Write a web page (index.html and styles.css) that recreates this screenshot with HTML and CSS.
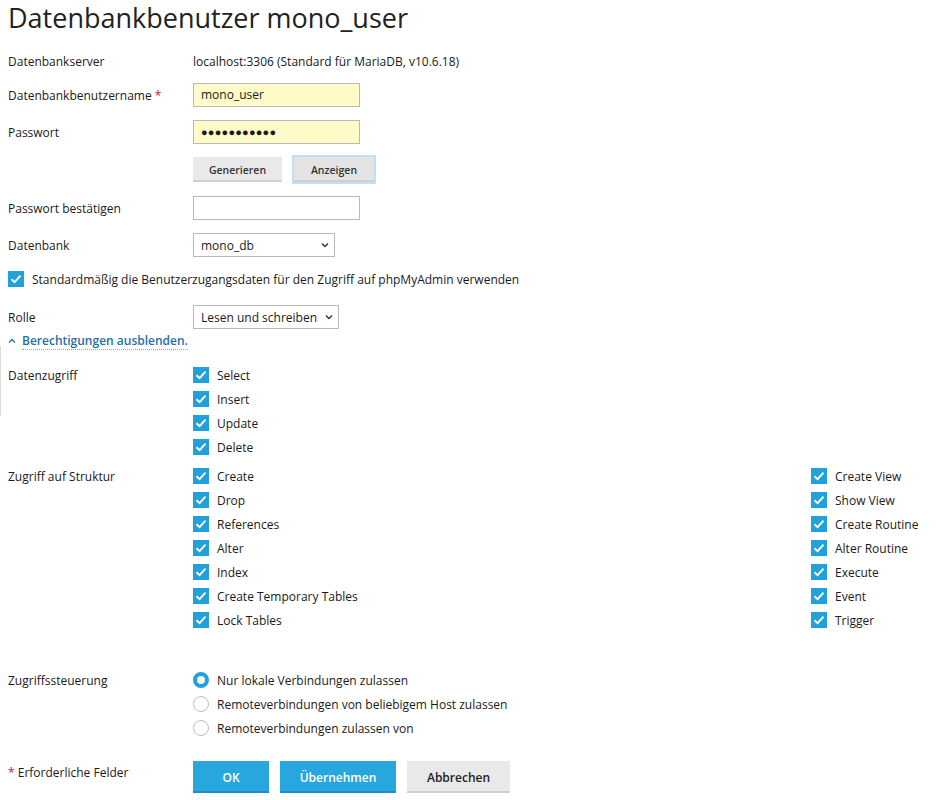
FILE: index.html
```html
<!DOCTYPE html>
<html lang="de">
<head>
<meta charset="utf-8">
<title>Datenbankbenutzer mono_user</title>
<link rel="stylesheet" href="styles.css">
</head>
<body>
<div class="edge-line"></div>
<main class="page">
  <h1 class="title">Datenbankbenutzer mono_user</h1>

  <div class="row r-server">
    <div class="label">Datenbankserver</div>
    <div class="field">localhost:3306 (Standard für MariaDB, v10.6.18)</div>
  </div>

  <div class="row r-user">
    <div class="label">Datenbankbenutzername <span class="req">*</span></div>
    <div class="field"><div class="input filled">mono_user</div></div>
  </div>

  <div class="row r-pass">
    <div class="label">Passwort</div>
    <div class="field"><div class="input filled dots">●●●●●●●●●●●</div></div>
  </div>

  <div class="row r-btns">
    <div class="label"></div>
    <div class="field btns">
      <button class="btn grey">Generieren</button>
      <button class="btn grey focus">Anzeigen</button>
    </div>
  </div>

  <div class="row r-confirm">
    <div class="label">Passwort bestätigen</div>
    <div class="field"><div class="input"></div></div>
  </div>

  <div class="row r-db">
    <div class="label">Datenbank</div>
    <div class="field">
      <div class="select w-db"><span>mono_db</span>
        <svg class="chev" width="8" height="6" viewBox="0 0 8 6"><path d="M1 1.5 L4 4.5 L7 1.5" fill="none" stroke="#333" stroke-width="1.4"/></svg>
      </div>
    </div>
  </div>

  <div class="row r-pma">
    <label class="check wide"><span class="box"><svg width="16" height="16" viewBox="0 0 16 16"><path d="M3.5 8.2 L6.6 11.2 L12.5 4.6" fill="none" stroke="#fff" stroke-width="1.9"/></svg></span>Standardmäßig die Benutzerzugangsdaten für den Zugriff auf phpMyAdmin verwenden</label>
  </div>

  <div class="row r-role">
    <div class="label">Rolle</div>
    <div class="field">
      <div class="select w-role"><span>Lesen und schreiben</span>
        <svg class="chev" width="8" height="6" viewBox="0 0 8 6"><path d="M1 1.5 L4 4.5 L7 1.5" fill="none" stroke="#333" stroke-width="1.4"/></svg>
      </div>
    </div>
  </div>

  <div class="row r-link">
    <a class="toggle" href="#"><svg class="up" width="8" height="6" viewBox="0 0 8 6"><path d="M1 4.5 L4 1.5 L7 4.5" fill="none" stroke="#1f6fa8" stroke-width="1.3"/></svg><span class="link-text">Berechtigungen ausblenden.</span></a>
  </div>

  <div class="group r-data">
    <div class="label">Datenzugriff</div>
    <div class="list">
      <label class="check"><span class="box"><svg width="16" height="16" viewBox="0 0 16 16"><path d="M3.5 8.2 L6.6 11.2 L12.5 4.6" fill="none" stroke="#fff" stroke-width="1.9"/></svg></span>Select</label>
      <label class="check"><span class="box"><svg width="16" height="16" viewBox="0 0 16 16"><path d="M3.5 8.2 L6.6 11.2 L12.5 4.6" fill="none" stroke="#fff" stroke-width="1.9"/></svg></span>Insert</label>
      <label class="check"><span class="box"><svg width="16" height="16" viewBox="0 0 16 16"><path d="M3.5 8.2 L6.6 11.2 L12.5 4.6" fill="none" stroke="#fff" stroke-width="1.9"/></svg></span>Update</label>
      <label class="check"><span class="box"><svg width="16" height="16" viewBox="0 0 16 16"><path d="M3.5 8.2 L6.6 11.2 L12.5 4.6" fill="none" stroke="#fff" stroke-width="1.9"/></svg></span>Delete</label>
    </div>
  </div>

  <div class="group struct r-struct">
    <div class="label">Zugriff auf Struktur</div>
    <div class="list">
      <label class="check"><span class="box"><svg width="16" height="16" viewBox="0 0 16 16"><path d="M3.5 8.2 L6.6 11.2 L12.5 4.6" fill="none" stroke="#fff" stroke-width="1.9"/></svg></span>Create</label>
      <label class="check"><span class="box"><svg width="16" height="16" viewBox="0 0 16 16"><path d="M3.5 8.2 L6.6 11.2 L12.5 4.6" fill="none" stroke="#fff" stroke-width="1.9"/></svg></span>Drop</label>
      <label class="check"><span class="box"><svg width="16" height="16" viewBox="0 0 16 16"><path d="M3.5 8.2 L6.6 11.2 L12.5 4.6" fill="none" stroke="#fff" stroke-width="1.9"/></svg></span>References</label>
      <label class="check"><span class="box"><svg width="16" height="16" viewBox="0 0 16 16"><path d="M3.5 8.2 L6.6 11.2 L12.5 4.6" fill="none" stroke="#fff" stroke-width="1.9"/></svg></span>Alter</label>
      <label class="check"><span class="box"><svg width="16" height="16" viewBox="0 0 16 16"><path d="M3.5 8.2 L6.6 11.2 L12.5 4.6" fill="none" stroke="#fff" stroke-width="1.9"/></svg></span>Index</label>
      <label class="check"><span class="box"><svg width="16" height="16" viewBox="0 0 16 16"><path d="M3.5 8.2 L6.6 11.2 L12.5 4.6" fill="none" stroke="#fff" stroke-width="1.9"/></svg></span>Create Temporary Tables</label>
      <label class="check"><span class="box"><svg width="16" height="16" viewBox="0 0 16 16"><path d="M3.5 8.2 L6.6 11.2 L12.5 4.6" fill="none" stroke="#fff" stroke-width="1.9"/></svg></span>Lock Tables</label>
    </div>
    <div class="list">
      <label class="check"><span class="box"><svg width="16" height="16" viewBox="0 0 16 16"><path d="M3.5 8.2 L6.6 11.2 L12.5 4.6" fill="none" stroke="#fff" stroke-width="1.9"/></svg></span>Create View</label>
      <label class="check"><span class="box"><svg width="16" height="16" viewBox="0 0 16 16"><path d="M3.5 8.2 L6.6 11.2 L12.5 4.6" fill="none" stroke="#fff" stroke-width="1.9"/></svg></span>Show View</label>
      <label class="check"><span class="box"><svg width="16" height="16" viewBox="0 0 16 16"><path d="M3.5 8.2 L6.6 11.2 L12.5 4.6" fill="none" stroke="#fff" stroke-width="1.9"/></svg></span>Create Routine</label>
      <label class="check"><span class="box"><svg width="16" height="16" viewBox="0 0 16 16"><path d="M3.5 8.2 L6.6 11.2 L12.5 4.6" fill="none" stroke="#fff" stroke-width="1.9"/></svg></span>Alter Routine</label>
      <label class="check"><span class="box"><svg width="16" height="16" viewBox="0 0 16 16"><path d="M3.5 8.2 L6.6 11.2 L12.5 4.6" fill="none" stroke="#fff" stroke-width="1.9"/></svg></span>Execute</label>
      <label class="check"><span class="box"><svg width="16" height="16" viewBox="0 0 16 16"><path d="M3.5 8.2 L6.6 11.2 L12.5 4.6" fill="none" stroke="#fff" stroke-width="1.9"/></svg></span>Event</label>
      <label class="check"><span class="box"><svg width="16" height="16" viewBox="0 0 16 16"><path d="M3.5 8.2 L6.6 11.2 L12.5 4.6" fill="none" stroke="#fff" stroke-width="1.9"/></svg></span>Trigger</label>
    </div>
  </div>

  <div class="group r-access">
    <div class="label">Zugriffssteuerung</div>
    <div class="list">
      <label class="radio"><span class="dot on"></span>Nur lokale Verbindungen zulassen</label>
      <label class="radio"><span class="dot"></span>Remoteverbindungen von beliebigem Host zulassen</label>
      <label class="radio"><span class="dot"></span>Remoteverbindungen zulassen von</label>
    </div>
  </div>

  <div class="group r-actions">
    <div class="label req-note"><span class="req">*</span> Erforderliche Felder</div>
    <div class="actions">
      <button class="btn primary ok">OK</button>
      <button class="btn primary apply">Übernehmen</button>
      <button class="btn grey cancel">Abbrechen</button>
    </div>
  </div>
</main>
</body>
</html>
```

FILE: styles.css
```css
* { box-sizing: border-box; }

html, body {
  margin: 0;
  padding: 0;
  background: #ffffff;
}

body {
  font-family: "Open Sans", "Noto Sans", "Liberation Sans", sans-serif;
  font-size: 12px;
  color: #1a1a1a;
  position: relative;
}

.edge-line {
  position: absolute;
  left: 0;
  top: 346px;
  width: 1px;
  height: 70px;
  background: #dcdcdc;
}

.page {
  padding: 0 0 0 8px;
}

.title {
  font-size: 27px;
  font-weight: 400;
  line-height: 34px;
  margin: 1px 0 0 0;
  color: #222222;
  letter-spacing: 0;
}

.row {
  display: grid;
  grid-template-columns: 185px 1fr;
  align-items: center;
  height: 24px;
}

.label {
  line-height: 18px;
  padding-top: 1px;
}

.req { color: #c8102e; }

.r-server { margin-top: 14px; }
.r-user { margin-top: 10px; }
.r-pass { margin-top: 13px; }
.r-btns { margin-top: 11px; height: 29px; }
.r-confirm { margin-top: 12px; }
.r-db { margin-top: 13px; }
.r-pma { margin-top: 10px; display: flex; }
.r-role { margin-top: 14px; }
.r-link { margin-top: 2px; height: 20px; display: flex; }

.input {
  width: 167px;
  height: 24px;
  border: 1px solid #b9b9b9;
  background: #ffffff;
  padding: 0 7px;
  line-height: 22px;
  font-size: 12px;
}

.input.filled { background: #fffbc8; }
.input.dots { font-size: 11px; letter-spacing: 0.2px; }

.btns {
  display: flex;
  align-items: center;
  gap: 10px;
}

.btn {
  font-family: "Open Sans", "Noto Sans", "Liberation Sans", sans-serif;
  font-weight: 600;
  border: none;
  cursor: pointer;
  padding: 0;
}

.btn.grey {
  background: #e9e9e9;
  color: #333333;
  box-shadow: inset 0 -2px 0 #cfcfcf;
}

.btns .btn {
  height: 25px;
  font-size: 10.5px;
}

.btns .btn:first-child { width: 89px; }
.btns .btn.focus {
  width: 80px;
  background: #e3e3e3;
  box-shadow: inset 0 -2px 0 #cfcfcf, 0 0 0 2px #bfe0f6;
  margin-left: 2px;
}

.select {
  height: 24px;
  border: 1px solid #b9b9b9;
  background: #ffffff;
  display: flex;
  align-items: center;
  justify-content: space-between;
  padding: 0 5px 0 7px;
  white-space: nowrap;
}

.select.w-db { width: 142px; }
.select.w-role { width: 146px; }

.chev { flex: none; }

.check {
  display: flex;
  align-items: center;
  gap: 8px;
  height: 24px;
  white-space: nowrap;
}

.box {
  width: 16px;
  height: 16px;
  background: #22a0db;
  flex: none;
  display: block;
}

.box svg { display: block; }

.toggle {
  display: flex;
  align-items: center;
  text-decoration: none;
  color: #1f6fa8;
  font-weight: 600;
}

.toggle .up { margin-right: 6px; margin-top: -1px; }

.link-text {
  border-bottom: 1px dotted #6fb3dc;
  line-height: 16px;
}

.group {
  display: grid;
  grid-template-columns: 185px 1fr;
  align-items: start;
}

.group > .label { line-height: 24px; }

.r-data { margin-top: 12px; }
.r-struct { margin-top: 5px; grid-template-columns: 185px 618px 1fr; }
.r-access { margin-top: 36px; }
.r-actions { margin-top: 21px; }

.list {
  display: flex;
  flex-direction: column;
}

.radio {
  display: flex;
  align-items: center;
  gap: 8px;
  height: 24px;
  white-space: nowrap;
}

.dot {
  width: 16px;
  height: 16px;
  border-radius: 50%;
  border: 1px solid #bdbdbd;
  background: #ffffff;
  flex: none;
}

.dot.on {
  border: 4.5px solid #22a0db;
  background: #ffffff;
}

.req-note { line-height: 22px !important; }

.actions {
  display: flex;
  gap: 11px;
}

.actions .btn {
  height: 32px;
  font-size: 12px;
}

.btn.primary {
  background: #28a7df;
  color: #ffffff;
  box-shadow: inset 0 -2px 0 #1d8fc4;
}

.btn.ok { width: 76px; }
.btn.apply { width: 116px; }
.btn.cancel { width: 103px; color: #222222; }
```
